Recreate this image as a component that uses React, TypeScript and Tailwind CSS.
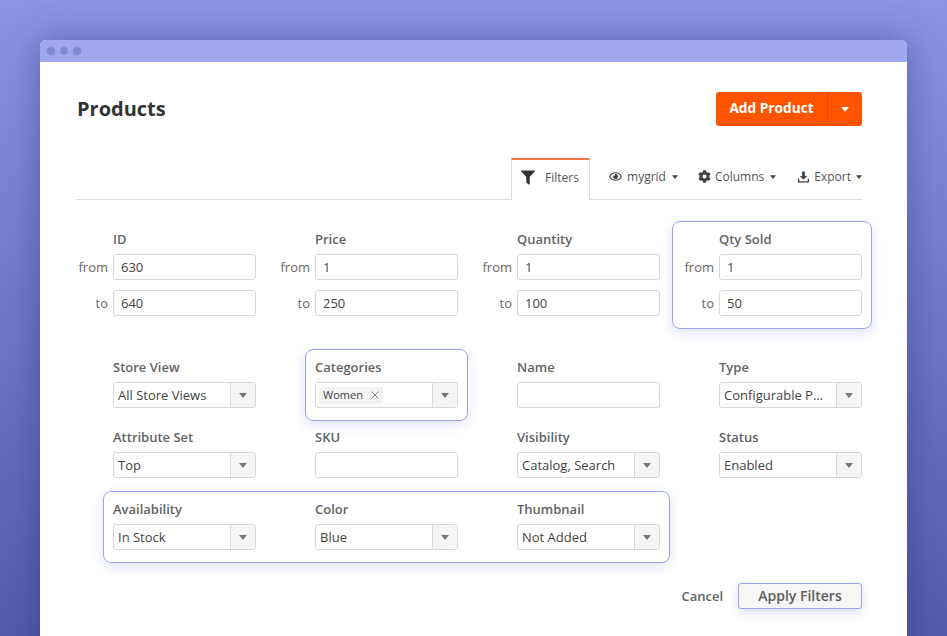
import { FaCog, FaFilter, FaRegEye } from "react-icons/fa";

function Caret({ className }: { className: string }) {
  return (
    <svg viewBox="0 0 8 5" className={className}>
      <path d="M0 0h8L4 5z" fill="currentColor" />
    </svg>
  );
}

function TextInput({ value = "" }: { value?: string }) {
  return (
    <div className="flex h-[26px] w-[143px] items-center rounded-[3px] border border-[#d8d8d8] bg-white pl-[7px] pt-px text-[13px] text-[#444]">
      {value}
    </div>
  );
}

function RangeInput({ label, value }: { label: string; value: string }) {
  return (
    <div className="relative">
      <span className="absolute right-[148px] top-[4px] text-[13px] text-[#666]">{label}</span>
      <TextInput value={value} />
    </div>
  );
}

function Select({ value }: { value: string }) {
  return (
    <div className="flex h-[26px] w-[143px] items-center rounded-[3px] border border-[#d8d8d8] bg-white text-[13px] text-[#444]">
      <span className="min-w-0 flex-1 truncate pl-[4px] pt-px">{value}</span>
      <span className="flex h-full w-[25px] shrink-0 items-center justify-center rounded-r-[3px] border-l border-[#d8d8d8] bg-[#f5f5f5] text-[#777]">
        <Caret className="h-[5px] w-[8px]" />
      </span>
    </div>
  );
}

function Label({ children }: { children: string }) {
  return <div className="h-[18px] text-[13px] font-semibold leading-[18px] text-[#636363]">{children}</div>;
}

function Range({ title, from, to }: { title: string; from: string; to: string }) {
  return (
    <div className="flex flex-col">
      <div className="mb-[6px] mt-[1px]">
        <Label>{title}</Label>
      </div>
      <RangeInput label="from" value={from} />
      <div className="mt-[10px]">
        <RangeInput label="to" value={to} />
      </div>
    </div>
  );
}

function SelectField({ title, value }: { title: string; value: string }) {
  return (
    <div className="flex flex-col gap-[6px]">
      <Label>{title}</Label>
      <Select value={value} />
    </div>
  );
}

function InputField({ title }: { title: string }) {
  return (
    <div className="flex flex-col gap-[6px]">
      <Label>{title}</Label>
      <TextInput />
    </div>
  );
}

function Toolbar() {
  return (
    <div className="mt-[32px] flex h-[42px] items-stretch justify-end border-b border-[#dcdcdc] text-[12px] text-[#555]">
      <div className="-mb-px mr-[19px] flex w-[79px] items-center border-x border-t-2 border-x-[#dcdcdc] border-t-[#f0734a] bg-white pb-[5px] pl-[10px]">
        <FaFilter className="-ml-px mr-[10px] h-[15px] w-[14px] text-[#333]" />
        Filters
      </div>
      <div className="flex items-center pb-[4px]">
        <FaRegEye className="mr-[5px] h-[13px] w-[13px] text-[#444]" />
        mygrid
        <Caret className="ml-[6px] mr-[20px] h-[4px] w-[6px] text-[#444]" />
        <FaCog className="mr-[4px] h-[13px] w-[13px] text-[#444]" />
        Columns
        <Caret className="ml-[6px] mr-[21px] h-[4px] w-[6px] text-[#444]" />
        <svg viewBox="0 0 14 14" className="mr-[4px] h-[14px] w-[13px] text-[#444]">
          <path d="M5.5 1h3v5h2.5L7 10 3 6h2.5z" fill="currentColor" />
          <path d="M1 9v4h12V9h-1.5v2.5h-9V9z" fill="currentColor" />
        </svg>
        Export
        <Caret className="ml-[5px] h-[4px] w-[6px] text-[#444]" />
      </div>
    </div>
  );
}

export default function App() {
  return (
    <div className="h-[636px] w-[947px] overflow-hidden bg-gradient-to-b from-[#8b95e3] to-[#525bad] px-[40px] pt-[40px] font-['Open_Sans',sans-serif]">
      <div className="h-[640px] overflow-hidden rounded-t-[6px] bg-white shadow-[0_0_36px_rgba(40,45,110,0.45)]">
        <div className="flex h-[22px] items-center gap-[5px] bg-[#9fa8ee] pl-[7px]">
          <span className="h-[8px] w-[8px] rounded-full bg-[#7f89d8]" />
          <span className="h-[8px] w-[8px] rounded-full bg-[#7f89d8]" />
          <span className="h-[8px] w-[8px] rounded-full bg-[#7f89d8]" />
        </div>

        <div className="pl-[36px] pr-[45px]">
          <div className="mt-[30px] flex items-center justify-between">
            <h1 className="pl-px text-[20px] font-bold text-[#333]">Products</h1>
            <div className="flex h-[34px] items-stretch rounded-[3px] bg-[#ff5500] text-white">
              <span className="flex w-[111px] items-center justify-center pb-[2px] text-[13.7px] font-bold">Add Product</span>
              <span className="flex w-[35px] items-center justify-center border-l border-[#e04c00]">
                <Caret className="h-[5px] w-[8px]" />
              </span>
            </div>
          </div>

          <Toolbar />

          <div className="ml-[37px] mt-[29px] grid grid-cols-[repeat(4,143px)] gap-x-[59px]">
            <Range title="ID" from="630" to="640" />
            <Range title="Price" from="1" to="250" />
            <Range title="Quantity" from="1" to="100" />
            <div className="-ml-[47px] -mr-[10px] -mt-[8px] -mb-[13px] rounded-[8px] border border-[#9aa3f0] pb-[12px] pl-[46px] pr-[9px] pt-[7px] shadow-[0_4px_12px_rgba(120,130,230,0.22)]">
              <Range title="Qty Sold" from="1" to="50" />
            </div>
          </div>

          <div className="ml-[37px] mt-[42px] grid grid-cols-[repeat(4,143px)] gap-x-[59px] gap-y-[20px]">
            <SelectField title="Store View" value="All Store Views" />
            <div className="-mx-[10px] -mb-[13px] -mt-[9px] rounded-[8px] border border-[#9aa3f0] pb-[12px] pl-[9px] pr-[9px] pt-[8px] shadow-[0_4px_12px_rgba(120,130,230,0.22)]">
              <div className="flex flex-col gap-[6px]">
                <Label>Categories</Label>
                <div className="flex h-[26px] w-[143px] items-center rounded-[3px] border border-[#d8d8d8] bg-white text-[11px] text-[#444]">
                  <span className="ml-[3px] flex h-[17px] items-center rounded-[2px] bg-[#f3f3f3] px-[4px]">
                    Women
                    <svg viewBox="0 0 8 8" className="ml-[8px] h-[8px] w-[8px] text-[#888]">
                      <path d="M0.5 0.5l7 7M7.5 0.5l-7 7" stroke="currentColor" fill="none" />
                    </svg>
                  </span>
                  <span className="ml-auto flex h-full w-[25px] items-center justify-center rounded-r-[3px] border-l border-[#d8d8d8] bg-[#f5f5f5] text-[#777]">
                    <Caret className="h-[5px] w-[8px]" />
                  </span>
                </div>
              </div>
            </div>
            <InputField title="Name" />
            <SelectField title="Type" value="Configurable P..." />
            <SelectField title="Attribute Set" value="Top" />
            <InputField title="SKU" />
            <SelectField title="Visibility" value="Catalog, Search" />
            <SelectField title="Status" value="Enabled" />
            <div className="col-span-3 -mx-[10px] -mb-[14px] -mt-[7px] grid grid-cols-[repeat(3,143px)] gap-x-[59px] rounded-[8px] border border-[#9aa3f0] pb-[12px] pl-[9px] pr-[9px] pt-[8px] shadow-[0_4px_12px_rgba(120,130,230,0.22)]">
              <SelectField title="Availability" value="In Stock" />
              <SelectField title="Color" value="Blue" />
              <SelectField title="Thumbnail" value="Not Added" />
            </div>
          </div>

          <div className="mt-[34px] flex items-center justify-end">
            <span className="mr-[15px] pt-[2px] text-[13px] font-semibold text-[#636363]">Cancel</span>
            <button className="h-[26px] w-[124px] rounded-[3px] border border-[#9aa3f0] bg-[#f6f6f6] pb-[2px] text-[14px] font-semibold text-[#5c5c5c] shadow-[0_4px_10px_rgba(120,130,230,0.25)]">
              Apply Filters
            </button>
          </div>
        </div>
      </div>
    </div>
  );
}
